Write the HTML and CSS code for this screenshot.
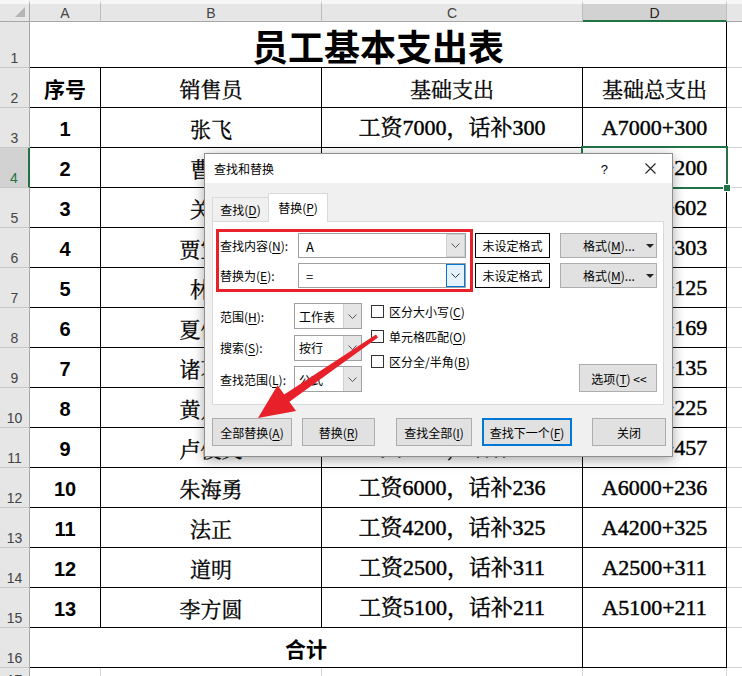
FILE: index.html
```html
<!DOCTYPE html>
<html lang="zh-CN">
<head>
<meta charset="utf-8">
<title>员工基本支出表</title>
<link rel="stylesheet" href="styles.css">
</head>
<body>
<div class="sheet">
  <div class="c hdr corner"><i class="tri-corner"></i></div>
  <div class="c hdr">A</div>
  <div class="c hdr">B</div>
  <div class="c hdr">C</div>
  <div class="c hdr hdr-on">D</div>
  <div class="c hdr last"></div>

  <div class="c rh">1</div>
  <div class="c t span4 title">员工基本支出表</div>
  <div class="c e"></div>

  <div class="c rh">2</div>
  <div class="c t hb">序号</div>
  <div class="c t song">销售员</div>
  <div class="c t song">基础支出</div>
  <div class="c t song">基础总支出</div>
  <div class="c e"></div>

  <div class="c rh">3</div>
  <div class="c t num">1</div>
  <div class="c t song">张飞</div>
  <div class="c t val">工资7000，话补300</div>
  <div class="c t val">A7000+300</div>
  <div class="c e"></div>

  <div class="c rh rh-on">4</div>
  <div class="c t num">2</div>
  <div class="c t song">曹操</div>
  <div class="c t val">工资5000，话补200</div>
  <div class="c t val sel">A5000+200</div>
  <div class="c e"></div>

  <div class="c rh">5</div>
  <div class="c t num">3</div>
  <div class="c t song">关羽</div>
  <div class="c t val">工资4500，话补602</div>
  <div class="c t val">A4500+602</div>
  <div class="c e"></div>

  <div class="c rh">6</div>
  <div class="c t num">4</div>
  <div class="c t song">贾宝玉</div>
  <div class="c t val">工资3800，话补303</div>
  <div class="c t val">A3800+303</div>
  <div class="c e"></div>

  <div class="c rh">7</div>
  <div class="c t num">5</div>
  <div class="c t song">林冲</div>
  <div class="c t val">工资5200，话补125</div>
  <div class="c t val">A5200+125</div>
  <div class="c e"></div>

  <div class="c rh">8</div>
  <div class="c t num">6</div>
  <div class="c t song">夏侯惇</div>
  <div class="c t val">工资4800，话补169</div>
  <div class="c t val">A4800+169</div>
  <div class="c e"></div>

  <div class="c rh">9</div>
  <div class="c t num">7</div>
  <div class="c t song">诸葛亮</div>
  <div class="c t val">工资6500，话补135</div>
  <div class="c t val">A6500+135</div>
  <div class="c e"></div>

  <div class="c rh">10</div>
  <div class="c t num">8</div>
  <div class="c t song">黄月英</div>
  <div class="c t val">工资3600，话补225</div>
  <div class="c t val">A3600+225</div>
  <div class="c e"></div>

  <div class="c rh">11</div>
  <div class="c t num">9</div>
  <div class="c t song">卢俊义</div>
  <div class="c t val">工资4100，话补457</div>
  <div class="c t val">A4100+457</div>
  <div class="c e"></div>

  <div class="c rh">12</div>
  <div class="c t num">10</div>
  <div class="c t song">朱海勇</div>
  <div class="c t val">工资6000，话补236</div>
  <div class="c t val">A6000+236</div>
  <div class="c e"></div>

  <div class="c rh">13</div>
  <div class="c t num">11</div>
  <div class="c t song">法正</div>
  <div class="c t val">工资4200，话补325</div>
  <div class="c t val">A4200+325</div>
  <div class="c e"></div>

  <div class="c rh">14</div>
  <div class="c t num">12</div>
  <div class="c t song">道明</div>
  <div class="c t val">工资2500，话补311</div>
  <div class="c t val">A2500+311</div>
  <div class="c e"></div>

  <div class="c rh">15</div>
  <div class="c t num">13</div>
  <div class="c t song">李方圆</div>
  <div class="c t val">工资5100，话补211</div>
  <div class="c t val">A5100+211</div>
  <div class="c e"></div>

  <div class="c rh">16</div>
  <div class="c t span3 hb">合计</div>
  <div class="c t"></div>
  <div class="c e"></div>

  <div class="c rh rh-last">17</div>
  <div class="c"></div>
  <div class="c"></div>
  <div class="c"></div>
  <div class="c"></div>
  <div class="c e"></div>
</div>

<div class="dlg">
  <div class="dlg-title">
    <span class="dlg-name">查找和替换</span>
    <span class="dlg-help">?</span>
    <svg class="dlg-x" width="11" height="11" viewBox="0 0 11 11"><path d="M0.5 0.5L10.5 10.5M10.5 0.5L0.5 10.5" stroke="#222" stroke-width="1.1" fill="none"/></svg>
  </div>
  <div class="dlg-body">
    <div class="tabs">
      <div class="tab">查找(<u>D</u>)</div>
      <div class="tab tab-on">替换(<u>P</u>)</div>
    </div>
    <div class="panel">
      <div class="find-row">
        <div class="redbox">
          <span class="lbl">查找内容(<u>N</u>):</span>
          <div class="combo"><span class="combo-text">A</span><span class="dd"><svg width="9" height="5" viewBox="0 0 9 5"><path d="M0.5 0.5L4.5 4.5L8.5 0.5" stroke="#555" fill="none"/></svg></span></div>
          <span class="lbl">替换为(<u>E</u>):</span>
          <div class="combo"><span class="combo-text">=</span><span class="dd dd-on"><svg width="9" height="5" viewBox="0 0 9 5"><path d="M0.5 0.5L4.5 4.5L8.5 0.5" stroke="#333" fill="none"/></svg></span></div>
        </div>
        <div class="fmt-col">
          <div class="fmt">未设定格式</div>
          <div class="fmt">未设定格式</div>
        </div>
        <div class="fbtn-col">
          <div class="btn fbtn"><span>格式(<u>M</u>)...</span><i class="tri"></i></div>
          <div class="btn fbtn"><span>格式(<u>M</u>)...</span><i class="tri"></i></div>
        </div>
      </div>
      <div class="options">
        <div class="opt-left">
          <span class="lbl">范围(<u>H</u>):</span>
          <div class="sel-box"><span class="combo-text">工作表</span><span class="dd dd-grey"><svg width="9" height="5" viewBox="0 0 9 5"><path d="M0.5 0.5L4.5 4.5L8.5 0.5" stroke="#555" fill="none"/></svg></span></div>
          <span class="lbl">搜索(<u>S</u>):</span>
          <div class="sel-box"><span class="combo-text">按行</span><span class="dd dd-grey"><svg width="9" height="5" viewBox="0 0 9 5"><path d="M0.5 0.5L4.5 4.5L8.5 0.5" stroke="#555" fill="none"/></svg></span></div>
          <span class="lbl">查找范围(<u>L</u>):</span>
          <div class="sel-box"><span class="combo-text">公式</span><span class="dd dd-grey"><svg width="9" height="5" viewBox="0 0 9 5"><path d="M0.5 0.5L4.5 4.5L8.5 0.5" stroke="#555" fill="none"/></svg></span></div>
        </div>
        <div class="opt-mid">
          <div class="chk"><i class="box"></i>区分大小写(<u>C</u>)</div>
          <div class="chk"><i class="box"></i>单元格匹配(<u>O</u>)</div>
          <div class="chk"><i class="box"></i>区分全/半角(<u>B</u>)</div>
        </div>
        <div class="btn opt-btn">选项(<u>T</u>) &lt;&lt;</div>
      </div>
    </div>
    <div class="actions">
      <div class="btn b-all">全部替换(<u>A</u>)</div>
      <div class="btn b-rep">替换(<u>R</u>)</div>
      <div class="btn b-fall">查找全部(<u>I</u>)</div>
      <div class="btn b-next">查找下一个(<u>F</u>)</div>
      <div class="btn b-close">关闭</div>
    </div>
  </div>
</div>

<svg class="arrow" width="742" height="676" viewBox="0 0 742 676">
  <polygon points="376,334.6 284.2,394.4 277.6,385.2 258,418 296,411 289.4,401.8 378,337.4" fill="#e8202a"/>
</svg>
</body>
</html>
```

FILE: styles.css
```css
html, body {
  margin: 0;
  padding: 0;
  background: #fff;
}
body {
  width: 742px;
  height: 676px;
  overflow: hidden;
  position: relative;
  font-family: "Noto Sans CJK SC", sans-serif;
}

/* ---------- sheet ---------- */
.sheet {
  display: grid;
  grid-template-columns: 30px 71px 221px 261px 144px 15px;
  grid-template-rows: 22px 46px repeat(15, 40px) 20px;
}
.c {
  box-sizing: border-box;
  border-right: 1px solid #d4d4d4;
  border-bottom: 1px solid #d4d4d4;
  display: flex;
  align-items: center;
  justify-content: center;
  line-height: 1.2;
  color: #000;
  white-space: nowrap;
  overflow: hidden;
}
.c.e { border-right: none; }
.c.t { border-right-color: #000; border-bottom-color: #000; }
.span4 { grid-column: span 4; }
.span3 { grid-column: span 3; }

.hdr {
  background: #e6e6e6;
  border-top: 4px solid #f7f7f7;
  border-right-color: #bdbdbd;
  border-bottom-color: #a8a8a8;
  font: 14px "Liberation Sans", sans-serif;
  line-height: 1;
  color: #444;
  padding-top: 1px;
}
.hdr.last { border-right: none; }
.hdr-on {
  background: #d2d2d2;
  border-bottom: 2px solid #217346;
  color: #222;
}
.corner { position: relative; border-right-color: #a8a8a8; }
.tri-corner {
  position: absolute;
  right: 4px;
  bottom: 4px;
  width: 0;
  height: 0;
  border-left: 10px solid transparent;
  border-bottom: 10px solid #b5b5b5;
}
.rh {
  background: #e6e6e6;
  border-right-color: #a8a8a8;
  border-bottom-color: #c6c6c6;
  align-items: flex-end;
  padding-bottom: 1px;
  font: 14px "Liberation Sans", sans-serif;
  line-height: 1.1;
  color: #444;
}
.rh-last { align-items: flex-start; padding-top: 5px; padding-bottom: 0; }
.rh-on {
  background: #d2d2d2;
  border-right: 2px solid #217346;
  color: #217346;
}

.title { font: 700 36px "Noto Sans CJK SC", sans-serif; line-height: 1.3; padding-top: 2px; overflow: visible; }
.hb { font: 700 21px "Noto Sans CJK SC", sans-serif; line-height: 1.2; padding-top: 2px; }
.song {
  font: 400 21px "Noto Serif CJK SC", "Noto Sans CJK SC", serif;
  line-height: 1.2;
  padding-top: 2px;
  -webkit-text-stroke: 0.35px #000;
}
.num { font: 700 20px "Liberation Sans", sans-serif; line-height: 1.2; padding-top: 2px; }
.val {
  font: 400 22px "Liberation Serif", "Noto Serif CJK SC", "Noto Sans CJK SC", serif;
  line-height: 1.2;
  padding-top: 2px;
  -webkit-text-stroke: 0.45px #000;
}

.sel { overflow: visible; position: relative; }
.sel::after {
  content: "";
  position: absolute;
  left: -2px;
  top: -2px;
  right: -2px;
  bottom: -2px;
  border: 2px solid #217346;
}
.sel::before {
  content: "";
  position: absolute;
  right: -5px;
  bottom: -5px;
  width: 6px;
  height: 6px;
  background: #217346;
  border: 1px solid #fff;
  z-index: 1;
}

/* ---------- dialog ---------- */
.dlg {
  position: absolute;
  left: 204px;
  top: 153px;
  width: 469px;
  height: 304px;
  box-sizing: border-box;
  border: 1px solid #8f8f8f;
  background: #f0f0f0;
  box-shadow: 0 3px 12px rgba(0, 0, 0, 0.35);
  font: 12px "Noto Sans CJK SC", sans-serif;
  color: #000;
  line-height: 1.2;
}
.dlg u { text-decoration: underline; text-underline-offset: 2px; }
.dlg-title {
  height: 29px;
  background: #fff;
  display: flex;
  align-items: center;
  padding-left: 9px;
}
.dlg-name { flex: 1; padding-top: 2px; }
.dlg-help { margin-right: 37px; font: 13px "Liberation Sans", sans-serif; padding-top: 2px; }
.dlg-x { margin-right: 16px; }

.dlg-body { padding-top: 10px; }
.tabs {
  display: flex;
  align-items: flex-end;
  height: 28px;
  margin-left: 7px;
}
.tab {
  box-sizing: border-box;
  width: 56px;
  height: 24px;
  border-top: 1px solid #d9d9d9;
  border-left: 1px solid #d9d9d9;
  display: flex;
  align-items: center;
  justify-content: center;
  padding-top: 2px;
}
.tab-on {
  width: 60px;
  height: 29px;
  margin-bottom: -1px;
  background: #fff;
  border: 1px solid #d9d9d9;
  border-bottom: none;
  position: relative;
  z-index: 1;
  padding-top: 0;
}

.panel {
  box-sizing: border-box;
  margin-left: 7px;
  width: 452px;
  height: 184px;
  background: #fff;
  border: 1px solid #d9d9d9;
  padding: 7px 0 0 3px;
}
.find-row { display: flex; align-items: flex-start; }
.redbox {
  box-sizing: border-box;
  width: 257px;
  height: 63px;
  border: 3px solid #e8202a;
  padding: 1px 0 0 1px;
  display: grid;
  grid-template-columns: 78px 168px;
  grid-auto-rows: 25px;
  row-gap: 5px;
  align-items: center;
}
.lbl { padding-top: 2px; }
.combo, .sel-box {
  box-sizing: border-box;
  height: 25px;
  border: 1px solid #a0a0a0;
  display: flex;
  align-items: stretch;
  background: #fff;
}
.combo-text { flex: 1; display: flex; align-items: center; padding-left: 7px; font-size: 13px; padding-top: 2px; }
.dd {
  width: 17px;
  display: flex;
  align-items: center;
  justify-content: center;
  background: #e5e5e5;
  border: 1px solid #cfcfcf;
}
.dd-on { background: #e5f1fb; border-color: #0078d7; }
.dd-grey { border: none; border-left: 1px solid #cfcfcf; }

.fmt-col { margin-left: 2px; margin-top: 4px; display: flex; flex-direction: column; gap: 5px; }
.fmt {
  box-sizing: border-box;
  width: 75px;
  height: 25px;
  border: 1px solid #000;
  display: flex;
  align-items: center;
  justify-content: center;
  padding-top: 2px;
}
.fbtn-col { margin-left: 10px; margin-top: 4px; display: flex; flex-direction: column; gap: 5px; }
.btn {
  box-sizing: border-box;
  background: #e1e1e1;
  border: 1px solid #adadad;
  display: flex;
  align-items: center;
  justify-content: center;
  padding-top: 2px;
  height: 28px;
}
.fbtn { width: 97px; height: 25px; justify-content: flex-start; padding-left: 22px; }
.tri {
  margin-left: 11px;
  width: 0;
  height: 0;
  border-left: 4px solid transparent;
  border-right: 4px solid transparent;
  border-top: 4px solid #222;
  margin-top: -2px;
}

.options { display: flex; align-items: flex-start; margin-top: 11px; }
.opt-left {
  display: grid;
  grid-template-columns: 74px 68px;
  grid-auto-rows: 26px;
  row-gap: 5.5px;
  align-items: center;
  padding-left: 4px;
}
.sel-box { height: 26px; }
.sel-box .combo-text { padding-left: 4px; font-size: 12px; }
.opt-mid { margin-left: 9px; padding-top: 2px; display: flex; flex-direction: column; gap: 11px; }
.chk { display: flex; align-items: center; height: 14px; }
.box {
  box-sizing: border-box;
  width: 13px;
  height: 13px;
  border: 1px solid #333;
  background: #fff;
  margin-right: 5px;
  margin-top: -2px;
}
.opt-btn { width: 78px; margin-left: auto; margin-right: 6px; margin-top: 61px; padding-left: 2px; }

.actions { display: flex; margin-top: 13px; margin-left: 7px; }
.b-all { width: 80px; }
.b-rep { width: 73px; margin-left: 10px; }
.b-fall { width: 76px; margin-left: 21px; }
.b-next { width: 90px; margin-left: 10px; border: 2px solid #0078d7; }
.b-close { width: 74px; margin-left: 20px; }

.arrow { position: absolute; left: 0; top: 0; pointer-events: none; }
```
